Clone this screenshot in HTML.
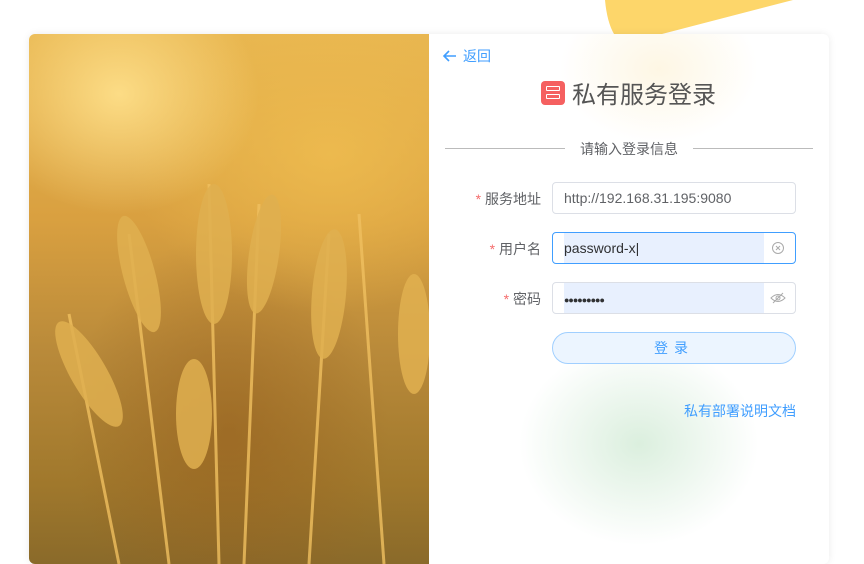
<!DOCTYPE html>
<html><head><meta charset="utf-8"><style>
*{margin:0;padding:0;box-sizing:border-box}
body{width:864px;height:554px;background:#fff;position:relative;overflow:hidden;font-family:"Liberation Sans","Noto Sans CJK SC",sans-serif}
.card{position:absolute;left:29px;top:34px;width:800px;height:530px;background:#fff;border-radius:6px;overflow:hidden;box-shadow:0 0 8px rgba(0,0,0,.08)}
.img{position:absolute;left:0;top:0;width:400px;height:530px;background:
radial-gradient(ellipse 140px 120px at 90px 60px,rgba(255,225,140,.9),transparent),
radial-gradient(ellipse 200px 160px at 300px 120px,rgba(240,190,80,.8),transparent),
radial-gradient(ellipse 160px 200px at 200px 400px,rgba(150,95,30,.6),transparent),
linear-gradient(180deg,#e8b650 0%,#d9a040 35%,#b98a3a 60%,#a0782c 85%,#8a6a2a 100%)}
.glow1{position:absolute;left:530px;top:-40px;width:200px;height:150px;background:radial-gradient(ellipse,rgba(252,236,195,.45),transparent 70%)}
.glow2{position:absolute;left:480px;top:300px;width:260px;height:220px;background:radial-gradient(ellipse,rgba(195,228,200,.6),transparent 65%)}
.back{position:absolute;left:413px;top:12px;color:#409eff;font-size:14px;display:flex;align-items:center}
.title{position:absolute;left:512px;top:41px;font-size:24px;color:#555;display:flex;align-items:center}
.logo{width:24px;height:24px;background:#f56060;border-radius:4px;margin-right:7px;position:relative}
.logo i{position:absolute;left:5px;width:14px;height:5px;border:1.5px solid #fff;border-radius:1px}
.div{position:absolute;top:114px;height:1px;background:#bbb}
.sub{position:absolute;left:551px;top:105px;font-size:14px;color:#606266}
.lab{position:absolute;font-size:14px;color:#606266;text-align:right;width:100px;left:412px}
.lab b{color:#f56c6c;font-weight:normal}
.inp{position:absolute;left:523px;width:244px;height:32px;border:1px solid #dcdfe6;border-radius:4px;font-size:14px;color:#606266;padding-left:11px;line-height:30px}
.fill{position:absolute;left:11px;top:0;width:200px;height:30px;background:#e8f0fe}
.btn{position:absolute;left:523px;top:298px;width:244px;height:32px;border:1px solid #a0cfff;border-radius:16px;background:#ecf5ff;color:#409eff;text-align:center;line-height:30px;font-size:14px;letter-spacing:6px}
.link{position:absolute;left:655px;top:367px;color:#409eff;font-size:14px}
</style></head><body>
<svg width="864" height="40" style="position:absolute;left:0;top:0"><path d="M605 0 Q607 22 614 34 L662 34 L793 0 Z" fill="#fdd66a"/></svg>
<div class="card">
<div class="img">
<svg width="400" height="530" style="position:absolute;left:0;top:0">
<g stroke="#f0c060" stroke-width="3" fill="none" opacity=".8">
<path d="M100 200 L140 530"/><path d="M180 150 L190 530"/><path d="M230 170 L215 530"/><path d="M300 200 L280 530"/><path d="M330 180 L355 530"/><path d="M40 280 L90 530"/>
</g>
<g fill="#e0b050" opacity=".85">
<ellipse cx="110" cy="240" rx="16" ry="60" transform="rotate(-15 110 240)"/>
<ellipse cx="185" cy="220" rx="18" ry="70"/>
<ellipse cx="235" cy="220" rx="15" ry="60" transform="rotate(8 235 220)"/>
<ellipse cx="300" cy="260" rx="17" ry="65" transform="rotate(5 300 260)"/>
<ellipse cx="60" cy="340" rx="18" ry="60" transform="rotate(-30 60 340)"/>
<ellipse cx="165" cy="380" rx="18" ry="55"/>
<ellipse cx="385" cy="300" rx="16" ry="60"/>
</g></svg>
</div>
<div class="glow1"></div><div class="glow2"></div>
<div class="back"><svg width="16" height="16" viewBox="0 0 16 16" style="margin-right:5px"><path d="M14 8H2M7 3L2 8l5 5" stroke="#409eff" stroke-width="1.6" fill="none"/></svg>返回</div>
<div class="title"><div class="logo"><i style="top:5px"></i><i style="top:13px"></i></div>私有服务登录</div>
<div class="div" style="left:416px;width:120px"></div>
<div class="div" style="left:664px;width:120px"></div>
<div class="sub">请输入登录信息</div>
<div class="lab" style="top:155px"><b>*</b> 服务地址</div>
<div class="inp" style="top:148px">http://192.168.31.195:9080</div>
<div class="lab" style="top:205px"><b>*</b> 用户名</div>
<div class="inp" style="top:198px;border-color:#409eff;color:#303133"><div class="fill"></div><span style="position:relative">password-x|</span><svg width="14" height="14" style="position:absolute;right:10px;top:8px"><circle cx="7" cy="7" r="5.5" stroke="#aaa" fill="none"/><path d="M5 5l4 4M9 5l-4 4" stroke="#aaa"/></svg></div>
<div class="lab" style="top:255px"><b>*</b> 密码</div>
<div class="inp" style="top:248px;color:#303133"><div class="fill"></div><span style="position:relative;font-size:9px;letter-spacing:-1px">●●●●●●●●●</span><svg width="16" height="14" style="position:absolute;right:9px;top:8px"><path d="M1 7Q8 0 15 7Q8 14 1 7Z" stroke="#aaa" fill="none"/><circle cx="8" cy="7" r="2" stroke="#aaa" fill="none"/><path d="M3 12L13 2" stroke="#aaa"/></svg></div>
<div class="btn">登录</div>
<div class="link">私有部署说明文档</div>
</div>
</body></html>
